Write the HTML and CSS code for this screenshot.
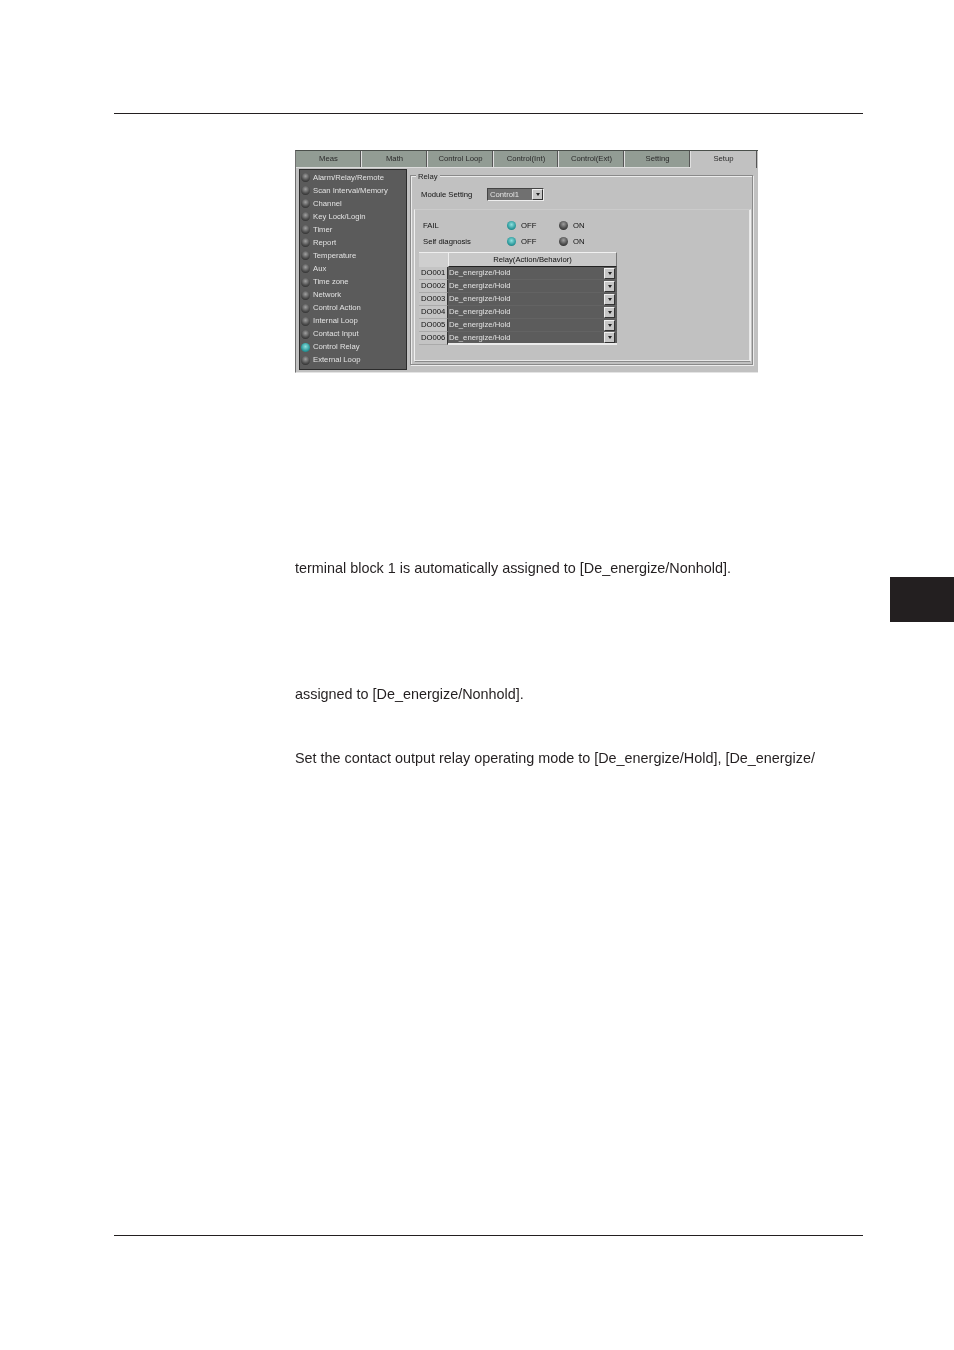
FILE: index.html
```html
<!DOCTYPE html>
<html lang="en">
<head>
<meta charset="utf-8">
<title>Control Relay setup</title>
<link rel="stylesheet" href="styles.css">
</head>
<body>
<div class="page">
  <hr class="rule rule-top">
  <div class="shot">
    <div class="tabs">
      <div class="tab">Meas</div><div class="tab">Math</div><div class="tab">Control Loop</div><div class="tab">Control(Int)</div><div class="tab">Control(Ext)</div><div class="tab">Setting</div><div class="tab tab-on">Setup</div>
    </div>
    <div class="panes">
      <div class="side">
        <div class="side-row"><i class="led"></i>Alarm/Relay/Remote</div>
        <div class="side-row"><i class="led"></i>Scan Interval/Memory</div>
        <div class="side-row"><i class="led"></i>Channel</div>
        <div class="side-row"><i class="led"></i>Key Lock/Login</div>
        <div class="side-row"><i class="led"></i>Timer</div>
        <div class="side-row"><i class="led"></i>Report</div>
        <div class="side-row"><i class="led"></i>Temperature</div>
        <div class="side-row"><i class="led"></i>Aux</div>
        <div class="side-row"><i class="led"></i>Time zone</div>
        <div class="side-row"><i class="led"></i>Network</div>
        <div class="side-row"><i class="led"></i>Control Action</div>
        <div class="side-row"><i class="led"></i>Internal Loop</div>
        <div class="side-row"><i class="led"></i>Contact Input</div>
        <div class="side-row"><i class="led led-on"></i>Control Relay</div>
        <div class="side-row"><i class="led"></i>External Loop</div>
      </div>
      <div class="group">
        <div class="legend">Relay</div>
        <div class="module">
          <span class="module-label">Module Setting</span>
          <div class="combo"><span class="combo-val">Control1</span><span class="btn"><b class="arrow"></b></span></div>
        </div>
        <div class="inner">
          <div class="opt"><span class="opt-name">FAIL</span><i class="led led-on"></i><span class="opt-off">OFF</span><i class="led"></i><span class="opt-on">ON</span></div>
          <div class="opt"><span class="opt-name">Self diagnosis</span><i class="led led-on"></i><span class="opt-off">OFF</span><i class="led"></i><span class="opt-on">ON</span></div>
          <div class="table">
            <div class="t-corner"></div><div class="t-head">Relay(Action/Behavior)</div>
            <div class="t-id">DO001</div><div class="t-val"><span>De_energize/Hold</span><span class="btn"><b class="arrow"></b></span></div>
            <div class="t-id">DO002</div><div class="t-val"><span>De_energize/Hold</span><span class="btn"><b class="arrow"></b></span></div>
            <div class="t-id">DO003</div><div class="t-val"><span>De_energize/Hold</span><span class="btn"><b class="arrow"></b></span></div>
            <div class="t-id">DO004</div><div class="t-val"><span>De_energize/Hold</span><span class="btn"><b class="arrow"></b></span></div>
            <div class="t-id">DO005</div><div class="t-val"><span>De_energize/Hold</span><span class="btn"><b class="arrow"></b></span></div>
            <div class="t-id">DO006</div><div class="t-val"><span>De_energize/Hold</span><span class="btn"><b class="arrow"></b></span></div>
          </div>
        </div>
      </div>
    </div>
  </div>
  <p class="para para-1">terminal block 1 is automatically assigned to [De_energize/Nonhold].</p>
  <p class="para para-2">assigned to [De_energize/Nonhold].</p>
  <p class="para para-3">Set the contact output relay operating mode to [De_energize/Hold], [De_energize/</p>
  <hr class="rule rule-bottom">
  <div class="chapter"></div>
</div>
</body>
</html>
```
FILE: styles.css
```css
* { box-sizing: border-box; }
html, body { margin: 0; padding: 0; background: #fff; }
.page { position: relative; width: 954px; height: 1350px; overflow: hidden; font-family: "Liberation Sans", Arial, sans-serif; color: #231f20; }
.rule { display: block; height: 1px; border: 0; margin: 0 91px 0 114px; background: #231f20; }
.rule-top { margin-top: 113px; }
.rule-bottom { margin-top: 469px; }
.para { margin: 0 0 0 295px; font-size: 14.4px; line-height: 16px; white-space: nowrap; filter: blur(.15px); }
.para-1 { margin-top: 187px; }
.para-2 { margin-top: 110px; }
.para-3 { margin-top: 48px; }
.chapter { position: absolute; left: 890px; top: 577px; width: 64px; height: 45px; background: #231f20; }

.shot { width: 463px; height: 223px; margin: 36px 0 0 295px; background: #c1c1c1; border-top: 1px solid #4a4f4b; border-left: 1px solid #6e6e6e; border-bottom: 1px solid #e4e4e4; font-size: 7.7px; line-height: 10px; color: #333; filter: blur(.35px); }
.tabs { display: grid; grid-template-columns: 66px 66px 66px 65px 66px 66px 66px; height: 16px; }
.tab { background: #929c94; border-right: 1px solid #e0e0e0; border-bottom: 1px solid #dcdcdc; box-shadow: inset -1px 0 0 #555; text-align: center; line-height: 16px; color: #2a2a2a; }
.tab-on { background: #c1c1c1; border-bottom: 0; border-right: 1px solid #555; box-shadow: none; }
.panes { display: flex; padding: 2px 0 0 3px; }
.side { width: 108px; height: 201px; background: #5b5b5b; border: 1px solid #2c2c2c; padding: 1px 0 0 1px; }
.side-row { display: flex; align-items: center; gap: 3px; height: 13.07px; color: #e2e2e2; white-space: nowrap; }
.led { flex: none; display: block; width: 9px; height: 9px; border-radius: 50%; background: radial-gradient(circle at 50% 35%, #a0a0a0 0, #555 50%, #1a1a1a 100%); }
.led-on { background: radial-gradient(circle at 50% 40%, #8fe0de 0, #2c9a9c 60%, #1c5f62 100%); }

.group { position: relative; width: 343px; height: 190px; margin: 6px 0 0 3px; border: 1px solid #8a8a8a; box-shadow: 1px 1px 0 #ececec, inset 1px 1px 0 #ececec; padding: 0 1px 0 3px; }
.legend { position: absolute; left: 5px; top: -4px; padding: 0 2px; background: #c1c1c1; color: #222; }
.module { display: flex; align-items: center; height: 13px; margin-top: 12px; padding-left: 7px; color: #111; }
.module-label { width: 66px; }
.combo { display: flex; width: 57px; height: 13px; background: #707070; border: 1px solid #444; border-right-color: #eee; border-bottom-color: #eee; }
.combo-val { flex: 1; padding-left: 2px; line-height: 11px; color: #e4e4e4; }
.btn { flex: none; display: flex; align-items: center; justify-content: center; width: 11px; height: 11px; background: #c6c6c6; border: 1px solid; border-color: #f0f0f0 #333 #333 #f0f0f0; }
.arrow { display: block; width: 0; height: 0; border-left: 2px solid transparent; border-right: 2px solid transparent; border-top: 3px solid #222; }

.inner { width: 337px; height: 153px; margin-top: 8px; border-top: 1px solid #cbcbcb; border-left: 1px solid #efefef; border-right: 1px solid #efefef; border-bottom: 1px solid #8a8a8a; box-shadow: inset -1px -1px 0 #e8e8e8; padding: 8px 0 0 5px; }
.opt { display: flex; align-items: center; height: 16px; color: #111; }
.opt .led { position: relative; top: -1px; }
.opt-name { width: 87px; padding-left: 3px; }
.opt-off { width: 43px; padding-left: 5px; }
.opt-on { padding-left: 5px; }
.table { display: grid; grid-template-columns: 29px 169px; grid-template-rows: 15px; grid-auto-rows: 13px; margin-top: 2px; margin-left: -1px; }
.t-corner { background: #cfcfcf; border-top: 1px solid #eee; }
.t-head { background: #c8c8c8; border: 1px solid; border-color: #f0f0f0 #777 #222 #eee; text-align: center; line-height: 13px; color: #111; }
.t-id { background: #c4c4c4; border-right: 1px solid #333; border-bottom: 1px solid #aaa; padding-left: 2px; line-height: 12px; color: #111; }
.t-val { display: flex; align-items: center; justify-content: space-between; padding: 0 2px 0 1px; background: #5c5c5c; border-bottom: 1px solid #636363; color: #e2e2e2; }
.t-val:last-child { border-bottom: 2px solid #ececec; }
```
